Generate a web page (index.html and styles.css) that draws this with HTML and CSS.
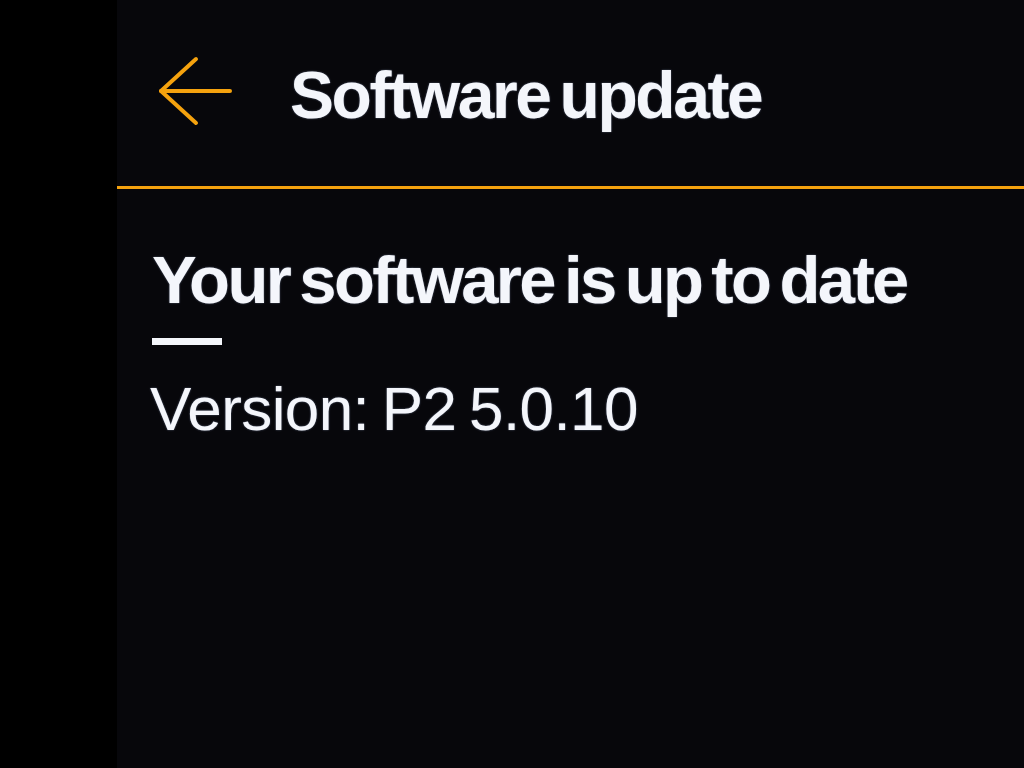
FILE: index.html
```html
<!DOCTYPE html>
<html lang="en">
<head>
<meta charset="utf-8">
<title>Software update</title>
<link rel="stylesheet" href="styles.css">
</head>
<body>
<div class="screen">
  <div class="bezel"></div>
  <main class="panel">
    <header class="header">
      <button class="back" aria-label="Back">
        <svg width="76" height="74" viewBox="0 0 76 74" fill="none" stroke="#f5a20e" stroke-width="4" stroke-linecap="round" stroke-linejoin="round">
          <path d="M3 35 H72"/>
          <path d="M38 3 L3 35 L38 67"/>
        </svg>
      </button>
      <h1 class="title">Software update</h1>
    </header>
    <section class="content">
      <h2 class="status">Your software is up to date</h2>
      <div class="rule"></div>
      <p class="version">Version: P2 5.0.10</p>
    </section>
  </main>
</div>
</body>
</html>
```
FILE: styles.css
```css
html, body {
  margin: 0;
  padding: 0;
  background: #000;
  height: 100%;
  overflow: hidden;
}
.screen {
  display: flex;
  width: 1024px;
  height: 768px;
  font-family: "Liberation Sans", Arial, sans-serif;
  color: #f4f6fb;
  text-shadow: 0 0 2px rgba(190, 210, 255, 0.45);
}
.bezel {
  width: 117px;
  flex: none;
  background: #000;
}
.panel {
  flex: 1;
  background: #07070b;
  display: flex;
  flex-direction: column;
}
.header {
  height: 189px;
  display: flex;
  align-items: center;
  padding-left: 41px;
  border-bottom: 3px solid #f5a20e;
  box-sizing: border-box;
}
.back {
  background: none;
  border: 0;
  padding: 0;
  margin: 0;
  width: 76px;
  height: 74px;
  display: flex;
}
.title {
  margin: 3px 0 0 56px;
  font-size: 66px;
  font-weight: 700;
  letter-spacing: -2.4px;
  word-spacing: -6px;
  line-height: 1;
}
.content {
  padding-left: 35px;
  padding-top: 57px;
}
.status {
  margin: 0;
  font-size: 67px;
  font-weight: 700;
  letter-spacing: -2.6px;
  word-spacing: -6px;
  line-height: 1;
}
.rule {
  width: 70px;
  height: 7px;
  background: #f4f6fb;
  margin-top: 25px;
}
.version {
  margin: 33px 0 0 -2px;
  font-size: 62px;
  font-weight: 400;
  letter-spacing: -0.6px;
  word-spacing: -4px;
  line-height: 1;
}
```
